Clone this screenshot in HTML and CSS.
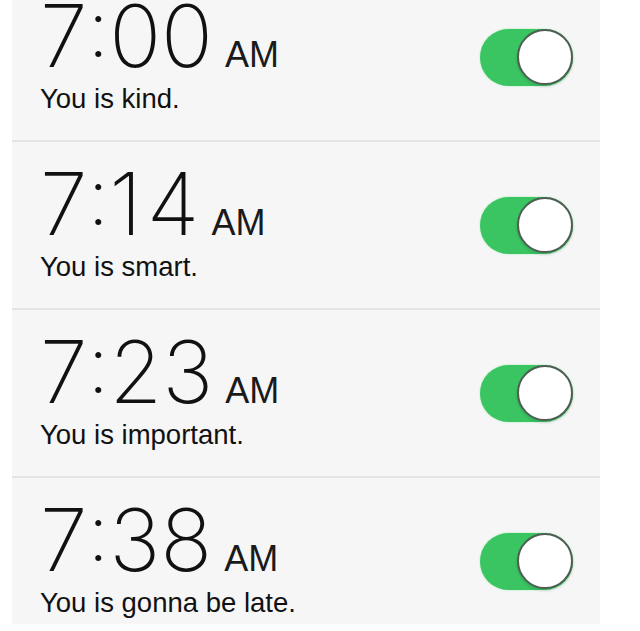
FILE: index.html
```html
<!DOCTYPE html>
<html>
<head>
<meta charset="utf-8">
<link rel="stylesheet" href="styles.css">
</head>
<body>
<div class="panel">
  <div class="row">
    <div class="info">
      <div class="time">7<span class="colon">:</span>00<span class="ampm">AM</span></div>
      <div class="label">You is kind.</div>
    </div>
    <div class="toggle"><div class="knob"></div></div>
  </div>
  <div class="row">
    <div class="info">
      <div class="time">7<span class="colon">:</span>1<span class="one-gap">4</span><span class="ampm">AM</span></div>
      <div class="label">You is smart.</div>
    </div>
    <div class="toggle"><div class="knob"></div></div>
  </div>
  <div class="row">
    <div class="info">
      <div class="time">7<span class="colon">:</span>23<span class="ampm">AM</span></div>
      <div class="label">You is important.</div>
    </div>
    <div class="toggle"><div class="knob"></div></div>
  </div>
  <div class="row">
    <div class="info">
      <div class="time">7<span class="colon">:</span>38<span class="ampm">AM</span></div>
      <div class="label">You is gonna be late.</div>
    </div>
    <div class="toggle"><div class="knob"></div></div>
  </div>
</div>
</body>
</html>
```
FILE: styles.css
```css
html, body {
  margin: 0;
  padding: 0;
  background: #ffffff;
  height: 631px;
  overflow: hidden;
}
.panel {
  margin: -26px 0 0 12px;
  width: 588px;
  height: 650px;
  overflow: hidden;
  background: #f6f6f7;
}
.row {
  height: 166px;
  border-bottom: 2px solid #e3e3e4;
  display: flex;
  align-items: center;
  justify-content: space-between;
  padding: 0 27px 0 28px;
}
.info {
  align-self: flex-start;
  padding-top: 27px;
  color: #111;
}
.time {
  font-family: "Inter", "Liberation Sans", sans-serif;
  font-weight: 160;
  font-size: 86px;
  line-height: 70px;
  height: 70px;
  letter-spacing: 0;
}
.one-gap {
  margin-left: 5px;
}
.colon {
  font-weight: 250;
  font-size: 78px;
  line-height: 0;
  vertical-align: 10px;
  margin: 0;
}
.ampm {
  font-family: "Liberation Sans", sans-serif;
  font-weight: 400;
  font-size: 36px;
  line-height: 0;
  color: #1a1a1a;
  margin-left: 12px;
}
.label {
  font-family: "Liberation Sans", sans-serif;
  font-size: 27.5px;
  line-height: 32px;
  margin-top: 12px;
}
.toggle {
  width: 93px;
  height: 57px;
  border-radius: 29px;
  background: #3ac462;
  box-shadow: 0 0 2px #9ce8b0;
  display: flex;
  justify-content: flex-end;
  align-items: center;
}
.knob {
  width: 56px;
  height: 56px;
  box-sizing: border-box;
  border-radius: 50%;
  background: #ffffff;
  border: 2px solid #4f5d53;
  box-shadow: 0 2px 3px rgba(0,0,0,0.12);
}
```
